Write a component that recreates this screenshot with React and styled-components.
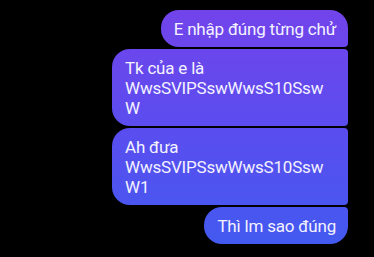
import React from "react"
import styled, { createGlobalStyle } from "styled-components"

const GlobalStyle = createGlobalStyle`
  html, body {
    margin: 0;
    padding: 0;
    background: #000;
  }
  body {
    font-family: Roboto, "Noto Sans", sans-serif;
  }
`

const Thread = styled.div`
  width: 374px;
  height: 257px;
  box-sizing: border-box;
  padding: 10px 26px 0 0;
  display: flex;
  flex-direction: column;
  align-items: flex-end;
  gap: 2px;
  background: #000;
  overflow: hidden;
`

const radius = {
  first: "18px 18px 4px 18px",
  middle: "18px 4px 4px 18px",
  last: "18px 4px 18px 18px",
}

const Bubble = styled.div`
  box-sizing: border-box;
  max-width: 236px;
  padding: 8.5px 12px 8.5px 13px;
  border-radius: ${(p) => radius[p.$pos]};
  background: linear-gradient(180deg, #7443ea 0px, #5a4def 130px, #405bef 257px);
  background-attachment: fixed;
  color: #f4f2ff;
  font-size: 17px;
  line-height: 20px;
  letter-spacing: -0.2px;
  overflow-wrap: anywhere;
`

const messages = [
  { text: "E nhập đúng từng chử", pos: "first" },
  { text: "Tk của e là WwsSVIPSswWwsS10SswW", pos: "middle" },
  { text: "Ah đưa WwsSVIPSswWwsS10SswW1", pos: "middle" },
  { text: "Thì lm sao đúng", pos: "last" },
]

export default function App() {
  return (
    <>
      <GlobalStyle />
      <Thread>
        {messages.map((m, i) => (
          <Bubble key={i} $pos={m.pos}>
            {m.text}
          </Bubble>
        ))}
      </Thread>
    </>
  )
}
